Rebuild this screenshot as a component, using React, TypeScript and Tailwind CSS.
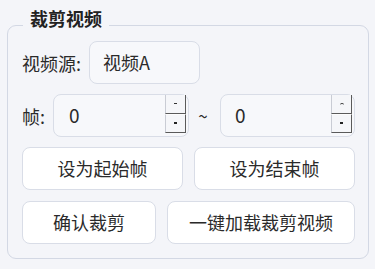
import React from "react";

function Spin({ upMark }: { upMark: "dash" | "tilde" }) {
  return (
    <div className="flex flex-col w-[21px] mr-[2px] pb-[3px]">
      <div className="flex-1 flex items-center justify-center border-l border-l-[#c9ccd4] border-r-[1.5px] border-r-[#5a5a5a] border-b-[1.5px] border-b-[#5a5a5a] bg-[#f5f6f9]">
        {upMark === "dash" ? (
          <div className="w-[3px] h-[1px] bg-[#333]" />
        ) : (
          <div className="w-[4px] h-[2px] border-t border-[#333] rounded-t-[2px]" />
        )}
      </div>
      <div className="flex-1 flex items-center justify-center border-l border-l-[#c9ccd4] border-t border-t-[#fdfdfd] border-r-[1.5px] border-r-[#5a5a5a] border-b-[1.5px] border-b-[#5a5a5a] bg-[#f5f6f9]">
        <div className="w-[3px] h-[2px] bg-[#222]" />
      </div>
    </div>
  );
}

export default function App() {
  const font = { fontFamily: '"Noto Sans CJK SC", "Noto Sans", sans-serif' };
  return (
    <div
      className="w-[375px] h-[269px] bg-[#f4f5f9] pl-[7px] pt-[25px] text-[18px] text-[#2a2a2a]"
      style={font}
    >
      <div className="relative w-[362px] h-[234px] border border-[#d3d8e4] rounded-[9px] pt-[15px] pl-[14px] pr-[13px] flex flex-col gap-[10px]">
        <span className="absolute left-[15px] top-[-20px] px-[7px] bg-[#f4f5f9] leading-[24px] font-bold text-[#222]">
          裁剪视频
        </span>

        <div className="flex items-center h-[43px]">
          <span className="w-[67px] leading-none">视频源:</span>
          <div className="w-[111px] h-[43px] border-[1.5px] border-[#d9dde7] rounded-[8px] bg-[#f7f8fb] flex items-center pl-[13px]">
            视频A
          </div>
        </div>

        <div className="flex items-center h-[43px]">
          <span className="w-[31px] leading-none">帧:</span>
          <div className="w-[136px] h-[43px] border-[1.5px] border-[#d9dde7] rounded-[8px] bg-[#f7f8fb] flex">
            <span className="flex-1 flex items-center pl-[15px] text-[19px]">0</span>
            <Spin upMark="dash" />
          </div>
          <span className="w-[31px] flex justify-center leading-none text-[17px] pr-[3px]">~</span>
          <div className="flex-1 h-[43px] border-[1.5px] border-[#d9dde7] rounded-[8px] bg-[#f7f8fb] flex">
            <span className="flex-1 flex items-center pl-[14px] text-[19px]">0</span>
            <Spin upMark="tilde" />
          </div>
        </div>

        <div className="flex gap-[11px] h-[43px]">
          <button className="flex-1 bg-white border-[1.5px] border-[#d9dde7] rounded-[8px] flex items-center justify-center">
            设为起始帧
          </button>
          <button className="flex-1 bg-white border-[1.5px] border-[#d9dde7] rounded-[8px] flex items-center justify-center">
            设为结束帧
          </button>
        </div>

        <div className="flex gap-[11px] h-[43px] mt-[1px]">
          <button className="w-[134px] bg-white border-[1.5px] border-[#d9dde7] rounded-[8px] flex items-center justify-center">
            确认裁剪
          </button>
          <button className="flex-1 bg-white border-[1.5px] border-[#d9dde7] rounded-[8px] flex items-center justify-center">
            一键加载裁剪视频
          </button>
        </div>
      </div>
    </div>
  );
}
